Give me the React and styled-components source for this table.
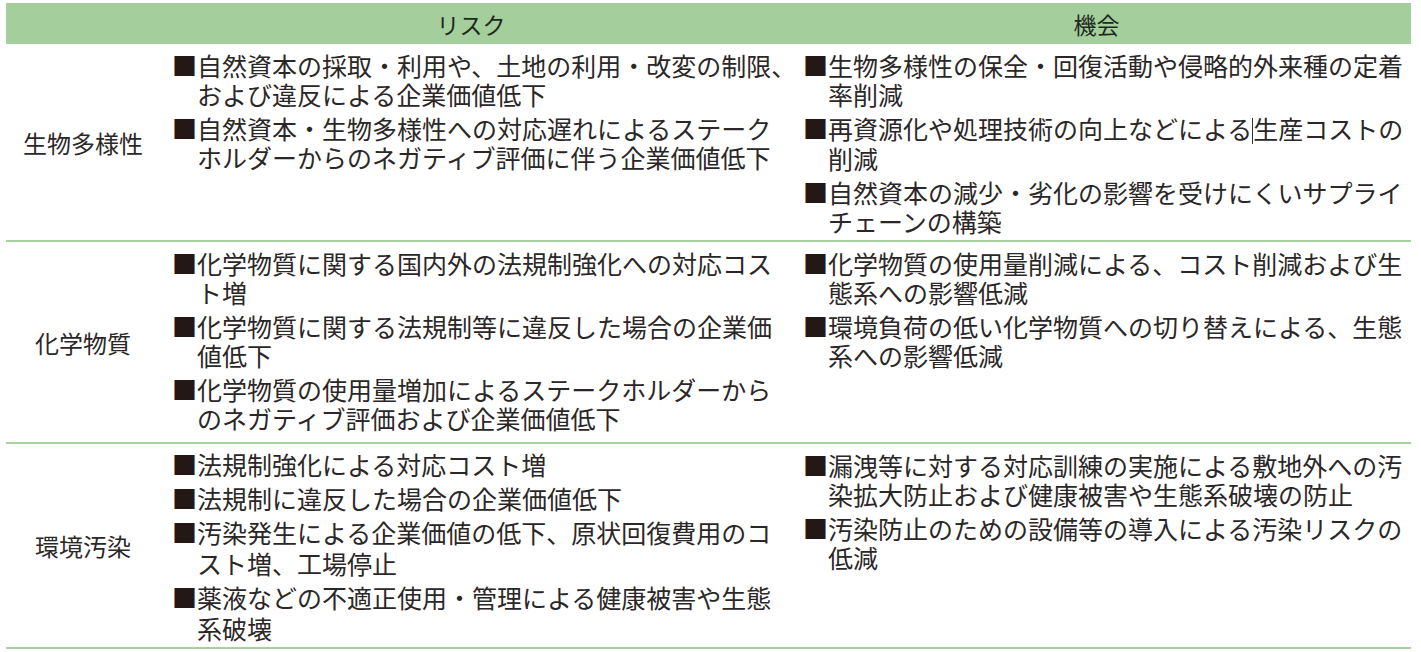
import React from "react";
import styled, { createGlobalStyle } from "styled-components";

const GlobalStyle = createGlobalStyle`
  body {
    margin: 3px 10px 0 6px;
    background: #fff;
    font-family: "Noto Sans CJK JP", "Noto Sans", sans-serif;
    color: #2b2728;
  }
`;

const rows = [
  {
    label: "生物多様性",
    bottom: 4,
    risks: [
      ["自然資本の採取・利用や、土地の利用・改変の制限、", "および違反による企業価値低下"],
      ["自然資本・生物多様性への対応遅れによるステーク", "ホルダーからのネガティブ評価に伴う企業価値低下"],
    ],
    chances: [
      ["生物多様性の保全・回復活動や侵略的外来種の定着", "率削減"],
      ["再資源化や処理技術の向上などによる|生産コストの", "削減"],
      ["自然資本の減少・劣化の影響を受けにくいサプライ", "チェーンの構築"],
    ],
  },
  {
    label: "化学物質",
    bottom: 9,
    risks: [
      ["化学物質に関する国内外の法規制強化への対応コス", "ト増"],
      ["化学物質に関する法規制等に違反した場合の企業価", "値低下"],
      ["化学物質の使用量増加によるステークホルダーから", "のネガティブ評価および企業価値低下"],
    ],
    chances: [
      ["化学物質の使用量削減による、コスト削減および生", "態系への影響低減"],
      ["環境負荷の低い化学物質への切り替えによる、生態", "系への影響低減"],
    ],
  },
  {
    label: "環境汚染",
    bottom: 3,
    loose: true,
    risks: [
      ["法規制強化による対応コスト増"],
      ["法規制に違反した場合の企業価値低下"],
      ["汚染発生による企業価値の低下、原状回復費用のコ", "スト増、工場停止"],
      ["薬液などの不適正使用・管理による健康被害や生態", "系破壊"],
    ],
    chances: [
      ["漏洩等に対する対応訓練の実施による敷地外への汚", "染拡大防止および健康被害や生態系破壊の防止"],
      ["汚染防止のための設備等の導入による汚染リスクの", "低減"],
    ],
  },
];

const Table = styled.div`
  width: 1405px;
`;

const Grid = styled.div`
  display: grid;
  grid-template-columns: 154px 622px 1fr;
`;

const Header = styled(Grid)`
  height: 41px;
  background: #a4cf9c;
  align-items: center;
`;

const HeadCell = styled.div`
  grid-column: ${(p) => p.$col};
  text-align: center;
  font-size: 23px;
  color: #1f2a1e;
`;

const Row = styled(Grid)`
  border-bottom: 2px solid #a9d0a1;
`;

const Label = styled.div`
  display: flex;
  align-items: center;
  justify-content: center;
  font-size: 24px;
`;

const Col = styled.div`
  padding: ${(p) => (p.$loose ? 5 : 7)}px 0 ${(p) => p.$bottom}px ${(p) => p.$pad}px;
  display: flex;
  flex-direction: column;
  gap: ${(p) => (p.$loose ? 3 : 5)}px;
`;

const Item = styled.div`
  display: flex;
  font-size: 25px;
  line-height: ${(p) => (p.$loose ? 31 : 29)}px;
  white-space: nowrap;
`;

const Bullet = styled.span`
  width: 25px;
  flex: none;
  color: #231815;
`;

const Caret = styled.span`
  display: inline-block;
  width: 1px;
  height: 26px;
  background: #333;
  vertical-align: -5px;
`;

const Text = ({ line }) => {
  const parts = line.split("|");
  if (parts.length === 1) return line;
  return (
    <>
      {parts[0]}
      <Caret />
      {parts[1]}
    </>
  );
};

const List = ({ items, pad, bottom, loose }) => (
  <Col $pad={pad} $bottom={bottom} $loose={loose}>
    {items.map((lines, i) => (
      <Item key={i} $loose={loose}>
        <Bullet>■</Bullet>
        <div>
          {lines.map((l, j) => (
            <React.Fragment key={j}>
              {j > 0 && <br />}
              <Text line={l} />
            </React.Fragment>
          ))}
        </div>
      </Item>
    ))}
  </Col>
);

export default function App() {
  return (
    <>
      <GlobalStyle />
      <Table>
        <Header>
          <HeadCell $col={2}>リスク</HeadCell>
          <HeadCell $col={3}>機会</HeadCell>
        </Header>
        {rows.map((r) => (
          <Row key={r.label}>
            <Label>{r.label}</Label>
            <List items={r.risks} pad={12} bottom={r.bottom} loose={r.loose} />
            <List items={r.chances} pad={21} bottom={r.bottom} />
          </Row>
        ))}
      </Table>
    </>
  );
}
